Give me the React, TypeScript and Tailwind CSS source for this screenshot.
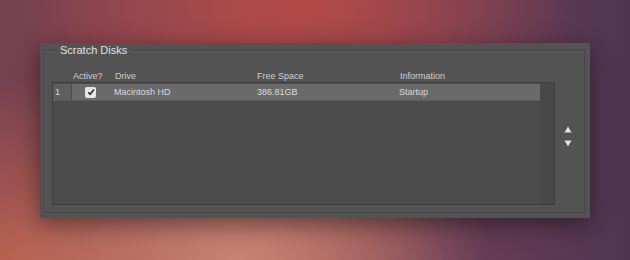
const grid = 'grid grid-cols-[19px_42px_143px_142px_1fr]';

function Check() {
  return (
    <div className="w-[11px] h-[11px] rounded-[2px] bg-[#e6e6e6] flex items-center justify-center">
      <svg width="8" height="8" viewBox="0 0 8 8">
        <path d="M1.2 4.2 L3.2 6.3 L6.9 1.5" fill="none" stroke="#2a2a2a" strokeWidth="1.6" />
      </svg>
    </div>
  );
}

function Arrow({ down }: { down?: boolean }) {
  return (
    <svg width="8" height="7" viewBox="0 0 8 7">
      <path d={down ? 'M0.5 0.5 L7.5 0.5 L4 6.5 Z' : 'M4 0.5 L7.5 6.5 L0.5 6.5 Z'} fill="#e4e4e4" />
    </svg>
  );
}

export default function App() {
  return (
    <div className="w-[630px] h-[260px] overflow-hidden pt-[43px] pl-[40px] font-['Liberation_Sans',Arial,sans-serif] bg-[radial-gradient(ellipse_at_48%_0%,#b24a48_0%,transparent_60%),radial-gradient(ellipse_at_38%_100%,#c78374_0%,transparent_45%),radial-gradient(ellipse_at_0%_100%,#b8604f_0%,transparent_50%),linear-gradient(90deg,#74404f_0%,#8f4a50_40%,#6a3e55_72%,#4f3552_100%)]">
      <div className="w-[550px] h-[175px] bg-[#535353] pt-[7px] pl-[4px] shadow-[0_6px_22px_rgba(0,0,0,0.45)]">
        <div className="relative w-[541px] h-[163px] border border-[#464646] shadow-[inset_1px_1px_0_#5c5c5c]">
          <div className="absolute -top-[8px] left-[12px] px-[3px] bg-[#535353] text-[11px] leading-[14px] text-[#e2e2e2]">
            Scratch Disks
          </div>

          <div className="flex pl-[7px] pt-[18px]">
            <div className="w-[503px]">
              <div className={`${grid} h-[14px] text-[9px] leading-[14px] text-[#d0d0d0]`}>
                <span />
                <span className="pl-[2px]">Active?</span>
                <span className="pl-[2px]">Drive</span>
                <span className="pl-[1px]">Free Space</span>
                <span className="pl-[2px]">Information</span>
              </div>

              <div className="mt-[-1px] h-[123px] flex border border-[#3e3e3e] bg-[#4c4c4c]">
                <div className="flex-1 pt-[1px]">
                  <div className={`${grid} h-[17px] text-[9px] leading-[16px] text-[#dadada] bg-[#6a6a6a] border-b border-[#5a5a5a]`}>
                    <span className="pl-[2px] bg-[#5e5e5e] border-r border-[#4c4c4c]">1</span>
                    <span className="flex items-center pl-[13px]">
                      <Check />
                    </span>
                    <span>Macintosh HD</span>
                    <span>386.81GB</span>
                    <span>Startup</span>
                  </div>
                </div>
                <div className="w-[14px] bg-[#484848]" />
              </div>
            </div>

            <div className="flex flex-col items-center gap-[7px] ml-[9px] pt-[57px]">
              <Arrow />
              <Arrow down />
            </div>
          </div>
        </div>
      </div>
    </div>
  );
}
